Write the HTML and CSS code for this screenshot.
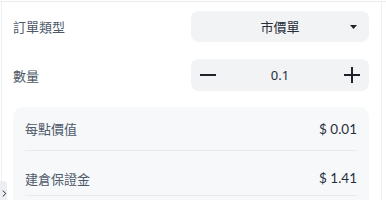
FILE: index.html
```html
<!DOCTYPE html>
<html lang="zh-TW">
<head>
    <meta charset="UTF-8">
    <meta name="viewport" content="width=device-width, initial-scale=1.0">
    <title>下單</title>
    <link rel="stylesheet" href="styles.css">
</head>
<body>
    <div class="topline"></div>
    <div class="panel">
        <div class="field">
            <span class="field-label">訂單類型</span>
            <div class="select">
                <span></span>
                <span class="select-value">市價單</span>
                <svg class="select-arrow" width="7" height="4" viewBox="0 0 7 4"><path d="M0 0h7L3.5 4z" fill="#1d2129"/></svg>
            </div>
        </div>
        <div class="field">
            <span class="field-label">數量</span>
            <div class="stepper">
                <button class="step-btn" aria-label="減少">
                    <svg width="16" height="16" viewBox="0 0 16 16"><path d="M0 8h16" stroke="#1d2129" stroke-width="2"/></svg>
                </button>
                <span class="step-value">0.1</span>
                <button class="step-btn" aria-label="增加">
                    <svg width="16" height="16" viewBox="0 0 16 16"><path d="M0 8h16M8 0v16" stroke="#1d2129" stroke-width="2"/></svg>
                </button>
            </div>
        </div>
        <div class="summary">
            <div class="summary-row">
                <span class="summary-label">每點價值</span>
                <span class="summary-value">$ 0.01</span>
            </div>
            <div class="summary-row summary-row-tall">
                <span class="summary-label">建倉保證金</span>
                <span class="summary-value">$ 1.41</span>
            </div>
        </div>
    </div>
    <button class="side-toggle" aria-label="展開">
        <svg width="6" height="9" viewBox="0 0 6 9"><path d="M1 1l3.5 3.5L1 8" fill="none" stroke="#1d2129" stroke-width="1.2"/></svg>
    </button>
</body>
</html>
```

FILE: styles.css
```css
body {
    margin: 0;
    padding-top: 1px;
    background-color: white;
    font-family: "Noto Sans", "Noto Sans CJK TC", sans-serif;
    font-size: 13px;
    color: #1d2129;
    overflow: hidden;
}
.topline {
    height: 1px;
    background-color: #e8eaef;
}
.panel {
    box-sizing: border-box;
    width: 381px;
    height: 198px;
    margin-left: 1px;
    padding: 9px 12px 0 11px;
    border-left: 1px solid #eef0f3;
    border-right: 1px solid #eef0f3;
    overflow: hidden;
}
.field {
    display: flex;
    align-items: center;
    justify-content: space-between;
    margin-bottom: 17px;
}
.field-label {
    color: #4e5969;
    font-family: "Noto Sans CJK TC", sans-serif;
}
.select {
    box-sizing: border-box;
    width: 178px;
    height: 31px;
    padding: 0 4px;
    display: grid;
    grid-template-columns: 24px 1fr 24px;
    align-items: center;
    background-color: #f2f3f5;
    border-radius: 8px;
}
.select-value {
    text-align: center;
    font-family: "Noto Sans CJK TC", sans-serif;
    color: #272e3b;
}
.select-arrow {
    justify-self: center;
}
.stepper {
    box-sizing: border-box;
    width: 178px;
    height: 32px;
    padding: 0 9px;
    display: flex;
    align-items: center;
    justify-content: space-between;
    background-color: #f2f3f5;
    border-radius: 8px;
}
.step-btn {
    border: none;
    background: none;
    padding: 0;
    width: 16px;
    height: 16px;
    display: flex;
    cursor: pointer;
}
.step-value {
    font-size: 13px;
    color: #272e3b;
}
.summary {
    margin-top: -1px;
    padding: 0 12px 20px;
    background-color: #f7f8fa;
    border-radius: 10px;
}
.summary-row {
    height: 43px;
    display: flex;
    align-items: center;
    justify-content: space-between;
    border-bottom: 1px solid #e8eaef;
}
.summary-row-tall {
    box-sizing: border-box;
    height: 45px;
    padding-top: 10px;
}
.summary-label {
    color: #4e5969;
    font-family: "Noto Sans CJK TC", sans-serif;
}
.summary-value {
    font-family: "Lato", "Noto Sans", sans-serif;
    font-size: 13.5px;
    color: #272e3b;
}
.side-toggle {
    position: fixed;
    left: 0;
    top: 181px;
    width: 7px;
    height: 24px;
    padding: 0 0 0 2px;
    border: none;
    border-radius: 0 3px 3px 0;
    background-color: #eceef2;
    display: flex;
    align-items: center;
}
```
